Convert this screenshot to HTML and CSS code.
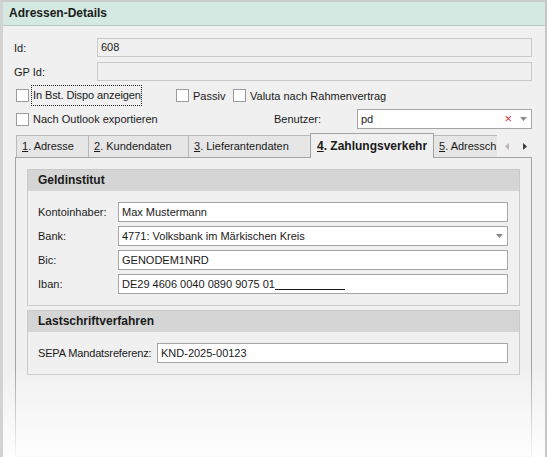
FILE: index.html
```html
<!DOCTYPE html>
<html lang="de">
<head>
<meta charset="utf-8">
<title>Adressen-Details</title>
<link rel="stylesheet" href="styles.css">
</head>
<body>
<div class="window">
  <div class="titlebar">Adressen-Details</div>
  <div class="content">
    <div class="row">
      <span class="lbl">Id:</span>
      <div class="field disabled">608</div>
    </div>
    <div class="row">
      <span class="lbl">GP Id:</span>
      <div class="field disabled"></div>
    </div>
    <div class="row checks1">
      <label class="chk"><span class="box"></span><span class="focus">In Bst. Dispo anzeigen</span></label>
      <label class="chk"><span class="box"></span><span class="txt">Passiv</span></label>
      <label class="chk"><span class="box"></span><span class="txt">Valuta nach Rahmenvertrag</span></label>
    </div>
    <div class="row checks2">
      <label class="chk"><span class="box"></span><span class="txt">Nach Outlook exportieren</span></label>
      <span class="benutzer">Benutzer:</span>
      <div class="field combo">
        <span class="val">pd</span>
        <span class="clear">×</span>
        <svg class="arrow" width="7" height="4" viewBox="0 0 7 4"><path d="M0 0h7L3.5 4z" fill="#8a8a8a"/></svg>
      </div>
    </div>
    <div class="tabs">
      <div class="tab t1"><u>1</u>. Adresse</div>
      <div class="tab t2"><u>2</u>. Kundendaten</div>
      <div class="tab t3"><u>3</u>. Lieferantendaten</div>
      <div class="tab t4 active"><u>4</u>. Zahlungsverkehr</div>
      <div class="tab t5"><u>5</u>. Adressch</div>
      <div class="scroll">
        <svg width="4" height="7" viewBox="0 0 4 7"><path d="M4 0v7L0 3.5z" fill="#b8b8b8"/></svg>
        <svg width="4" height="7" viewBox="0 0 4 7"><path d="M0 0v7l4-3.5z" fill="#3c3c3c"/></svg>
      </div>
    </div>
    <div class="panel">
      <div class="group">
        <div class="ghead">Geldinstitut</div>
        <div class="gbody">
          <div class="frow"><span class="flbl">Kontoinhaber:</span><div class="field white">Max Mustermann</div></div>
          <div class="frow"><span class="flbl">Bank:</span><div class="field white combo"><span class="val">4771: Volksbank im Märkischen Kreis</span><svg class="arrow" width="7" height="4" viewBox="0 0 7 4"><path d="M0 0h7L3.5 4z" fill="#8a8a8a"/></svg></div></div>
          <div class="frow"><span class="flbl">Bic:</span><div class="field white">GENODEM1NRD</div></div>
          <div class="frow"><span class="flbl">Iban:</span><div class="field white">DE29 4606 0040 0890 9075 01<span class="mask"></span></div></div>
        </div>
      </div>
      <div class="group g2">
        <div class="ghead">Lastschriftverfahren</div>
        <div class="gbody">
          <div class="frow"><span class="flbl wide">SEPA Mandatsreferenz:</span><div class="field white">KND-2025-00123</div></div>
        </div>
      </div>
    </div>
  </div>
  <div class="fade"></div>
</div>
</body>
</html>
```
FILE: styles.css
```css
* { box-sizing: border-box; }
html, body { margin: 0; padding: 0; background: #ffffff; }
body {
  font-family: "Liberation Sans", Arial, sans-serif;
  font-size: 11px;
  color: #1a1a1a;
}
.window {
  position: relative;
  width: 547px;
  height: 457px;
  overflow: hidden;
  background: #f0f0f0;
  border-top: 2px solid #cbcbcb;
  border-left: 3px solid #d3d3d3;
  border-right: 2px solid #c6c6c6;
  display: flex;
  flex-direction: column;
}
.titlebar {
  height: 24px;
  background: #d3e9e1;
  border-bottom: 1px solid #b7cbc3;
  font-weight: bold;
  font-size: 12px;
  line-height: 23px;
  padding-left: 6px;
  color: #1c1c1c;
}
.content {
  flex: 1;
  display: flex;
  flex-direction: column;
  padding: 12px 13px 0 11px;
  min-height: 0;
}
.row {
  display: flex;
  align-items: center;
  height: 19px;
  margin-bottom: 5px;
}
.lbl { width: 83px; flex: none; }
.field {
  flex: 1;
  height: 19px;
  border: 1px solid #c9c9c9;
  padding-left: 3px;
  line-height: 17px;
  white-space: nowrap;
  overflow: hidden;
}
.field.disabled { background: #f0f0f0; }
.field.white, .field.combo {
  background: #ffffff;
  border-color: #a5a5a5;
  height: 20px;
  line-height: 18px;
}
.combo { display: flex; align-items: center; }
.combo .val { flex: 1; }
.combo .clear {
  color: #d0353a;
  font-size: 13px;
  margin-right: 8px;
  line-height: 18px;
}
.combo .arrow { margin-right: 4px; flex: none; }

.checks1 { display: grid; grid-template-columns: 160px 57px auto; margin-left: 2px; }
.checks2 {
  display: grid;
  grid-template-columns: 258px 83px 1fr;
  margin-left: 2px;
  height: 20px;
  margin-bottom: 0;
  margin-top: -1px;
}
.chk { display: flex; align-items: center; }
.box {
  width: 13px;
  height: 13px;
  border: 1px solid #9c9c9c;
  background: #ffffff;
  margin-right: 3px;
  flex: none;
}
.focus {
  outline: 1px dotted #222;
  padding: 3px 0 3px 1px;
  line-height: 13px;
  letter-spacing: -0.1px;
}
.txt { padding-left: 1px; }
.checks2 .field { height: 20px; }

.tabs {
  display: flex;
  align-items: flex-end;
  height: 24px;
  margin: 4px 0 0 2px;
  position: relative;
  z-index: 1;
}
.tab {
  height: 22px;
  line-height: 21px;
  background: #e6e6e6;
  border: 1px solid #b9b9b9;
  border-bottom: none;
  border-right: none;
  padding-left: 5px;
  white-space: nowrap;
  overflow: hidden;
  flex: none;
}
.tab u { text-decoration: underline; }
.t1 { width: 72px; }
.t2 { width: 100px; }
.t3 { width: 122px; }
.t4 { width: 124px; }
.t5 { width: 63px; }
.tab.active {
  height: 25px;
  margin-bottom: -1px;
  background: #f0f0f0;
  border: 1px solid #a3a3a3;
  border-bottom: none;
  font-weight: bold;
  font-size: 12px;
  line-height: 24px;
  padding-left: 6px;
}
.tab.active + .tab { border-left: none; }
.scroll {
  flex: 1;
  height: 22px;
  display: flex;
  align-items: center;
  gap: 14px;
  padding-left: 8px;
}
.panel {
  flex: 1;
  margin-left: 1px;
  border: 1px solid #a3a3a3;
  background: #f0f0f0;
  padding: 11px;
}
.group {
  border: 1px solid #c9c9c9;
}
.g2 { margin-top: 4px; }
.ghead {
  height: 21px;
  background: #d5d5d5;
  font-weight: bold;
  font-size: 12px;
  line-height: 21px;
  padding-left: 10px;
}
.gbody { padding: 11px 11px 11px 10px; }
.frow {
  display: flex;
  align-items: center;
  height: 20px;
  margin-bottom: 4px;
}
.frow:last-child { margin-bottom: 0; }
.flbl { width: 80px; flex: none; }
.flbl.wide { width: 119px; letter-spacing: -0.15px; }
.mask {
  display: inline-block;
  width: 70px;
  height: 1px;
  background: #1a1a1a;
  vertical-align: -2px;
}
.fade {
  position: absolute;
  left: -3px;
  right: -2px;
  bottom: 0;
  height: 90px;
  background: linear-gradient(to bottom, rgba(255,255,255,0) 0%, rgba(255,255,255,0.55) 60%, rgba(255,255,255,0.92) 100%);
  pointer-events: none;
}
```
